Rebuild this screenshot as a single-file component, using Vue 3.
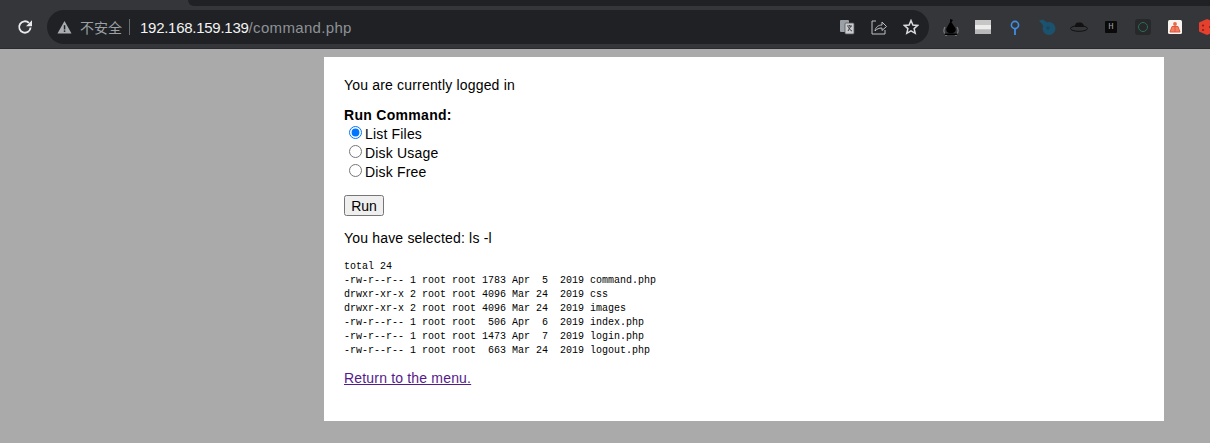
<script setup>
const lines = [
  'total 24',
  '-rw-r--r-- 1 root root 1783 Apr  5  2019 command.php',
  'drwxr-xr-x 2 root root 4096 Mar 24  2019 css',
  'drwxr-xr-x 2 root root 4096 Mar 24  2019 images',
  '-rw-r--r-- 1 root root  506 Apr  6  2019 index.php',
  '-rw-r--r-- 1 root root 1473 Apr  7  2019 login.php',
  '-rw-r--r-- 1 root root  663 Mar 24  2019 logout.php'
].join('\n')
</script>

<template>
  <div class="window">
    <header class="chrome">
      <div class="tabstrip"><div class="tabtrack"></div></div>
      <div class="toolbar">
        <svg class="reload" width="16" height="16" viewBox="0 0 16 16"><path d="M13.6 8.500a5.700 5.700 0 1 1-1.700-4.600" fill="none" stroke="#e8eaed" stroke-width="1.900"/><path d="M15 1.200v6H9z" fill="#e8eaed"/></svg>
        <div class="omnibox">
          <svg class="warn" width="15" height="14" viewBox="0 0 15 14"><path d="M7.500 1 14.500 13.500H.5z" fill="#a9acb0"/><rect x="6.800" y="5.200" width="1.500" height="4.300" fill="#202124"/><rect x="6.800" y="10.400" width="1.500" height="1.500" fill="#202124"/></svg>
          <span class="insecure">不安全</span>
          <span class="sep"></span>
          <span class="url"><b>192.168.159.139</b>/command.php</span>
          <span class="omni-icons">
            <svg width="16" height="16" viewBox="0 0 16 16"><rect x="1" y="1" width="9" height="12" rx="1" fill="#9aa0a6"/><rect x="6" y="4" width="9" height="11" rx="1" fill="#c9cbce" stroke="#55585c" stroke-width=".8"/><path d="M8 7h5M10.500 6v1M9 12l3-5M9.500 8c.6 2 2 3.300 3.500 4" stroke="#3a3c40" fill="none"/></svg>
            <svg width="16" height="16" viewBox="0 0 16 16"><path d="M5 2H1v13h13v-4" fill="none" stroke="#bdc1c6" stroke-width="1"/><path d="M4 12c.5-4 3.500-6 7-6V3l4.500 4.500L11 11.500V9c-3 0-5 .8-7 3z" fill="none" stroke="#bdc1c6" stroke-width="1"/></svg>
            <svg width="16" height="16" viewBox="0 0 16 16"><path d="M8 1.500 9.900 6l4.800.4-3.600 3.200 1.100 4.700L8 11.800 3.800 14.300l1.100-4.700L1.300 6.400 6.100 6z" fill="none" stroke="#dadce0" stroke-width="1.500"/></svg>
          </span>
        </div>
        <div class="extensions">
          <span class="ext"><svg width="18" height="18" viewBox="0 0 18 18"><path d="M3 9a7 7 0 1 0 12 0" fill="none" stroke="#77797c" stroke-width="1.400"/><path d="M8 1l3 1-1.500 2.200 4 6c1.200 3-1.500 5-4.500 5s-5.700-2-4.500-5l3.500-6.200z" fill="#000"/><path d="M2.500 15.500h13v1.500h-13z" fill="#000"/></svg></span>
          <span class="ext"><svg width="16" height="14" viewBox="0 0 16 14"><rect width="16" height="14" fill="#c6c6c6"/><rect y="5" width="16" height="4.500" fill="#ececec"/><rect y="9.500" width="16" height="4.500" fill="#b8b8b8"/></svg></span>
          <span class="ext"><svg width="10" height="15" viewBox="0 0 10 15"><circle cx="5" cy="5" r="3.600" fill="none" stroke="#3f8fe6" stroke-width="1.600"/><path d="M5 8.500V15" stroke="#3f8fe6" stroke-width="1.800"/></svg></span>
          <span class="ext"><svg width="18" height="16" viewBox="0 0 18 16"><circle cx="11" cy="9.500" r="6.500" fill="#1b536e"/><path d="M1 1.500l4-1 7 5-5 3.500z" fill="#1b536e"/><circle cx="10" cy="9" r="1.800" fill="#174660"/></svg></span>
          <span class="ext"><svg width="18" height="12" viewBox="0 0 18 12"><path d="M5 6c0-3 1-5 4-4.500 3-.5 5 1 5 4.500z" fill="#111"/><ellipse cx="9" cy="7.500" rx="8.500" ry="2.800" fill="none" stroke="#111"/></svg></span>
          <span class="ext"><span class="ext-h">H</span></span>
          <span class="ext"><span class="ext-ring"><i></i></span></span>
          <span class="ext"><svg width="14" height="14" viewBox="0 0 14 14"><rect width="14" height="14" rx="1.500" fill="#f7f3ef"/><circle cx="7" cy="4" r="1.900" fill="#e8694a"/><path d="M4 6.500h6l2 5.500H2zM7 6v6" fill="#ee8060" stroke="#e2553c" stroke-width="1"/></svg></span>
          <span class="ext"><svg width="16" height="16" viewBox="0 0 16 16"><path d="M0 3.500l8-3.500 8 3.500v9L8 16l-8-3.500z" fill="#e53f2e"/><circle cx="4" cy="6.500" r="1.100" fill="#8a2114"/><circle cx="4" cy="11" r="1.100" fill="#8a2114"/><circle cx="11" cy="8" r="1.100" fill="#8a2114"/></svg></span>
        </div>
      </div>
    </header>

    <main class="page">
      <section class="card">
        <p class="status">You are currently logged in</p>
        <form class="command" @submit.prevent>
          <strong class="label">Run Command:</strong>
          <label class="option"><input type="radio" name="cmd" checked />List Files</label>
          <label class="option"><input type="radio" name="cmd" />Disk Usage</label>
          <label class="option"><input type="radio" name="cmd" />Disk Free</label>
          <button class="run" type="submit">Run</button>
        </form>
        <p class="selected">You have selected: ls -l</p>
        <pre class="output">{{ lines }}</pre>
        <a class="back" href="#" @click.prevent>Return to the menu.</a>
      </section>
    </main>
  </div>
</template>

<style>
html, body { margin: 0; overflow: hidden; background: #aaaaaa; }
</style>

<style scoped>
.window { width: 1210px; height: 443px; display: flex; flex-direction: column; overflow: hidden; font-family: "Liberation Sans", Arial, sans-serif; }
.chrome { height: 49px; flex: none; background: #35363a; border-bottom: 1px solid #2a2b2e; box-sizing: border-box; display: flex; flex-direction: column; }
.tabstrip { height: 6px; flex: none; display: flex; justify-content: flex-end; }
.tabtrack { width: 1022px; background: #202124; border-bottom-left-radius: 6px; }
.toolbar { display: flex; align-items: center; height: 36px; margin-top: 3px; padding-left: 17px; overflow: hidden; }
.reload { flex: none; }
.omnibox { width: 882px; height: 34px; flex: none; margin-left: 14px; border-radius: 17px; background: #202124; display: flex; align-items: center; padding-left: 10px; box-sizing: border-box; }
.warn { flex: none; }
.insecure { margin-left: 8px; font: 14px "Noto Sans CJK SC", sans-serif; color: #9aa0a6; }
.sep { width: 1px; height: 16px; background: #6a6d72; margin: 0 10px 0 7px; }
.url { font-size: 15px; letter-spacing: .33px; font-family: "Liberation Sans", sans-serif; color: #8e9297; }
.url b { font-weight: 400; letter-spacing: -.27px; color: #f1f3f4; }
.omni-icons { margin-left: auto; display: flex; gap: 16px; padding-right: 10px; align-items: center; }
.extensions { display: flex; align-items: center; padding-left: 6px; flex: none; }
.ext { width: 32px; height: 32px; flex: none; display: flex; align-items: center; justify-content: center; }
.ext-h { width: 12px; height: 12px; background: #0a0a0a; color: #9a9a9a; font: 9px/12px "Liberation Mono", monospace; text-align: center; border-radius: 1px; }
.ext-ring { width: 16px; height: 16px; border-radius: 3px; background: #26282a; display: flex; align-items: center; justify-content: center; }
.ext-ring i { width: 8px; height: 8px; border: 1.500px solid #2f6b55; border-radius: 50%; }
.page { flex: 1; background: #aaaaaa; padding-top: 8px; display: flex; justify-content: flex-start; padding-left: 324px; }
.card { width: 840px; height: 364px; background: #fff; padding: 20px; box-sizing: border-box; font-size: 14px; line-height: 16px; letter-spacing: .18px; color: #000; }
.status { margin: 0 0 14px; }
.command { display: flex; flex-direction: column; align-items: flex-start; }
.label { letter-spacing: .3px; line-height: 16px; margin-bottom: 1px; }
.option { display: flex; align-items: center; height: 19px; padding-left: 5px; }
.option input { margin: 0 3px 3px 0; width: 13px; height: 13px; }
.run { margin-top: 14px; width: 40px; height: 21px; padding: 0; font: 14px "Liberation Sans", sans-serif; }
.selected { margin: 14px 0 0; }
.output { margin: 14px 0 0; letter-spacing: 0; font: 10px/14px "Liberation Mono", monospace; }
.back { display: inline-block; margin-top: 12px; color: #551a8b; text-decoration: underline; }
</style>
